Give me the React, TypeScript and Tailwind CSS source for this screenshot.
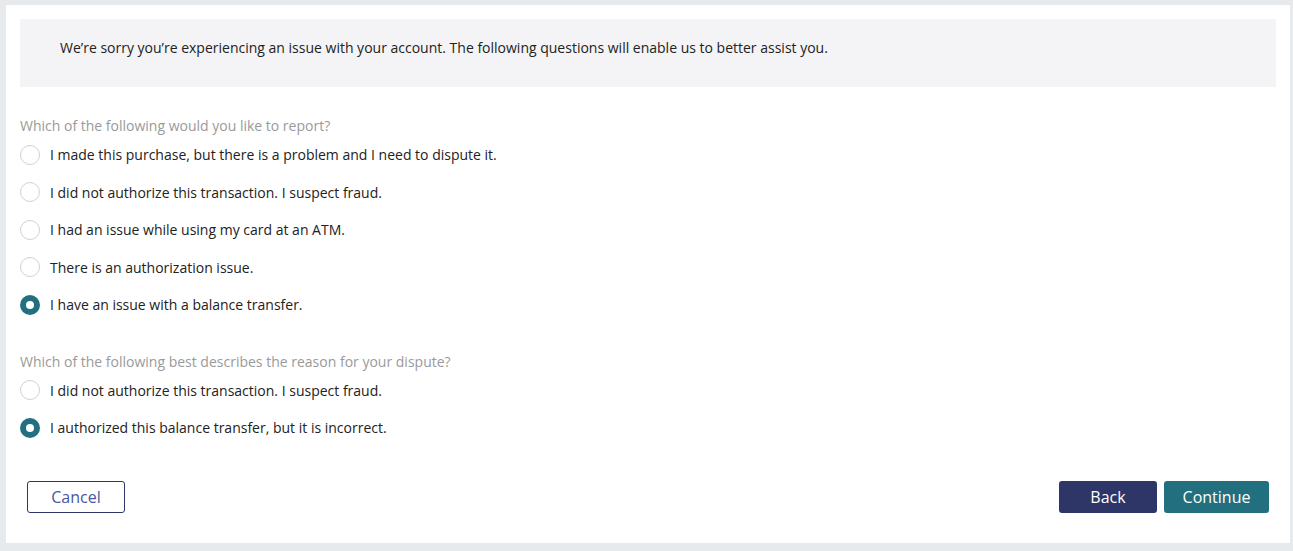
import React, { useState } from "react";

const reportOptions = [
    "I made this purchase, but there is a problem and I need to dispute it.",
    "I did not authorize this transaction. I suspect fraud.",
    "I had an issue while using my card at an ATM.",
    "There is an authorization issue.",
    "I have an issue with a balance transfer.",
];

const reasonOptions = [
    "I did not authorize this transaction. I suspect fraud.",
    "I authorized this balance transfer, but it is incorrect.",
];

interface RadioGroupProps {
    label: string;
    options: string[];
    selected: number;
    onChange: (i: number) => void;
}

const RadioGroup = ({ label, options, selected, onChange }: RadioGroupProps) => {
    return (
        <div className="flex flex-col">
            <div className="h-5 leading-5 text-[14px] text-[#9a9a9a]">
                {label}
            </div>
            {options.map((opt, i) => (
                <label
                    key={opt}
                    className="flex items-center h-[37.5px] cursor-pointer"
                    onClick={() => onChange(i)}
                >
                    {i === selected ? (
                        <span className="w-5 h-5 rounded-full bg-[#22707f] flex items-center justify-center">
                            <span className="w-[8px] h-[8px] rounded-full bg-white" />
                        </span>
                    ) : (
                        <span className="w-5 h-5 rounded-full border border-[#cfd3d6] bg-white" />
                    )}
                    <span className="ml-[10px] text-[14px] text-[#222222]">
                        {opt}
                    </span>
                </label>
            ))}
        </div>
    );
};

export default function App() {
    const [report, setReport] = useState(4);
    const [reason, setReason] = useState(1);

    return (
        <div
            className="min-h-[551px] bg-[#e6eaed] pt-[5px] pl-[6px] pr-[3px] pb-[8px]"
            style={{ fontFamily: '"Open Sans", sans-serif' }}
        >
            <div className="bg-white h-[538px] p-[14px] flex flex-col">
                <div className="h-[68px] bg-[#f4f4f6] pl-[40px] pt-[19px] leading-5 text-[14px] text-[#222222]">
                    We’re sorry you’re experiencing an issue with your account. The following questions will enable us to better assist you.
                </div>

                <div className="mt-[29px]">
                    <RadioGroup
                        label="Which of the following would you like to report?"
                        options={reportOptions}
                        selected={report}
                        onChange={setReport}
                    />
                </div>

                <div className="mt-[28px]">
                    <RadioGroup
                        label="Which of the following best describes the reason for your dispute?"
                        options={reasonOptions}
                        selected={reason}
                        onChange={setReason}
                    />
                </div>

                <div className="mt-[34px] flex items-center justify-between px-[7px]">
                    <button className="w-[98px] h-[32px] rounded-[3px] border border-[#2e3567] text-[#4a56a0] text-[16px] bg-white">
                        Cancel
                    </button>
                    <div className="flex gap-[7px]">
                        <button className="w-[98px] h-[32px] rounded-[3px] bg-[#2e3567] text-white text-[16px]">
                            Back
                        </button>
                        <button className="w-[105px] h-[32px] rounded-[3px] bg-[#22707f] text-white text-[16px]">
                            Continue
                        </button>
                    </div>
                </div>
            </div>
        </div>
    );
}
